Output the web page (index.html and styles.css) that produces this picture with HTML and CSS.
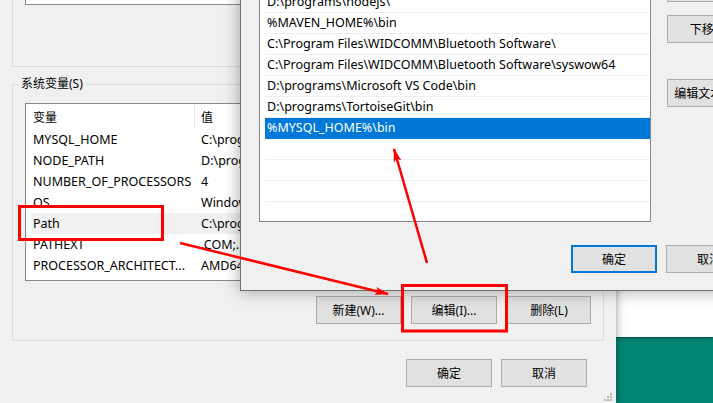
FILE: index.html
```html
<!DOCTYPE html>
<html lang="zh-CN">
<head>
<meta charset="utf-8">
<title>环境变量</title>
<link rel="stylesheet" href="styles.css">
</head>
<body>
<div class="desk">
  <div class="bgwin"></div>

  <div class="back">
    <div class="user-group"><div class="user-list"></div></div>
    <fieldset class="sys-group">
      <legend>系统变量(S)</legend>
      <div class="sys-list">
        <div class="sys-head"><span class="h-name">变量</span><span class="h-val">值</span></div>
        <div class="sys-row"><span class="c-name">MYSQL_HOME</span><span class="c-val">C:\programs\mysql-8.0.19-winx64</span></div>
        <div class="sys-row"><span class="c-name">NODE_PATH</span><span class="c-val">D:\programs\nodejs\node_global</span></div>
        <div class="sys-row"><span class="c-name">NUMBER_OF_PROCESSORS</span><span class="c-val">4</span></div>
        <div class="sys-row"><span class="c-name">OS</span><span class="c-val">Windows_NT</span></div>
        <div class="sys-row hover"><span class="c-name">Path</span><span class="c-val">C:\programs\Python38\Scripts\</span></div>
        <div class="sys-row"><span class="c-name">PATHEXT</span><span class="c-val">.COM;.EXE;.BAT;.CMD;.VBS</span></div>
        <div class="sys-row"><span class="c-name">PROCESSOR_ARCHITECT...</span><span class="c-val">AMD64</span></div>
      </div>
      <div class="btn-row">
        <button class="btn w85">新建(W)...</button>
        <button class="btn w86">编辑(I)...</button>
        <button class="btn w84">删除(L)</button>
      </div>
    </fieldset>
    <div class="dlg-row">
      <button class="btn w86">确定</button>
      <button class="btn w86">取消</button>
    </div>
    <svg class="grip" width="12" height="10" viewBox="0 0 12 10">
      <rect x="8" y="0" width="2" height="2" fill="#b9b9b9"/>
      <rect x="5" y="3" width="2" height="2" fill="#b9b9b9"/>
      <rect x="8" y="3" width="2" height="2" fill="#b9b9b9"/>
      <rect x="2" y="6" width="2" height="2" fill="#b9b9b9"/>
      <rect x="5" y="6" width="2" height="2" fill="#b9b9b9"/>
      <rect x="8" y="6" width="2" height="2" fill="#b9b9b9"/>
    </svg>
  </div>

  <div class="front">
    <div class="front-main">
      <div class="path-list">
        <div class="path-row">D:\programs\nodejs\</div>
        <div class="path-row">%MAVEN_HOME%\bin</div>
        <div class="path-row">C:\Program Files\WIDCOMM\Bluetooth Software\</div>
        <div class="path-row">C:\Program Files\WIDCOMM\Bluetooth Software\syswow64</div>
        <div class="path-row">D:\programs\Microsoft VS Code\bin</div>
        <div class="path-row">D:\programs\TortoiseGit\bin</div>
        <div class="path-row sel">%MYSQL_HOME%\bin</div>
        <div class="path-row"></div>
        <div class="path-row"></div>
        <div class="path-row"></div>
        <div class="path-row"></div>
      </div>
      <div class="side">
        <button class="btn w86 s1">上移(U)</button>
        <button class="btn w86 s2">下移(O)</button>
        <button class="btn w86 s3">编辑文本(T)...</button>
      </div>
    </div>
    <div class="front-foot">
      <button class="btn w86 focus">确定</button>
      <button class="btn w86">取消</button>
    </div>
  </div>

  <svg class="annot" width="713" height="403" viewBox="0 0 713 403">
    <defs>
      <marker id="ah" markerUnits="userSpaceOnUse" markerWidth="14" markerHeight="10" refX="13" refY="5" orient="auto">
        <path d="M0,1 L14,5 L0,9 L3,5 Z" fill="#f00"/>
      </marker>
    </defs>
    <rect x="19.5" y="206.5" width="143" height="33" fill="none" stroke="#f00" stroke-width="3"/>
    <rect x="402.5" y="285.5" width="104" height="45.5" fill="none" stroke="#f00" stroke-width="3"/>
    <line x1="180" y1="243" x2="388" y2="294" stroke="#f00" stroke-width="2.5" marker-end="url(#ah)"/>
    <line x1="427" y1="263" x2="394" y2="149" stroke="#f00" stroke-width="2.5" marker-end="url(#ah)"/>
  </svg>
</div>
</body>
</html>
```
FILE: styles.css
```css
* { box-sizing: border-box; }
html, body { margin: 0; padding: 0; }
body {
  width: 713px;
  height: 403px;
  overflow: hidden;
  background: #008574;
  font-family: "Noto Sans", "Noto Sans CJK SC", sans-serif;
  font-size: 12.5px;
  color: #000;
}
.desk { position: relative; width: 713px; height: 403px; overflow: hidden; }

.bgwin {
  position: absolute; left: 616px; top: 0; width: 97px; height: 337px;
  background: #fff; box-shadow: 0 1px 3px rgba(0,0,0,.45);
}

.back {
  position: absolute; left: 0; top: 0; width: 616px; height: 403px;
  background: #f0f0f0; padding: 0 12px;
  box-shadow: 1px 0 8px rgba(0,0,0,.35);
}
.user-group {
  height: 67px; border: 1px solid #dcdcdc; border-top: 0; padding-left: 12px;
}
.user-list {
  width: 560px; height: 5px; background: #fff;
  border: 1px solid #828790; border-top: 0;
}

.sys-group {
  margin: 9px 0 0; padding: 0 12px 16px; border: 1px solid #dcdcdc; min-width: 0;
}
.sys-group legend {
  margin-left: -7px; padding: 0 3px; line-height: 16px; font-size: 12px;
}
.sys-list {
  margin-top: 11px; width: 570px; height: 178px; background: #fff;
  border: 1px solid #828790; padding-left: 5px; overflow: hidden;
}
.sys-head { display: flex; height: 25px; align-items: stretch; }
.h-name {
  width: 164px; padding-left: 2px; border-right: 1px solid #e5e5e5;
  display: flex; align-items: center; font-size: 12px;
}
.h-val { padding-left: 6px; display: flex; align-items: center; font-size: 12px; }
.sys-row { display: flex; height: 21px; align-items: center; white-space: nowrap; }
.sys-row.hover { background: #f0f0f0; }
.c-name { width: 170px; padding-left: 2px; overflow: hidden; }
.c-val { white-space: nowrap; }

.btn {
  font: inherit; font-size: 12px; color: #000; background: #e1e1e1;
  border: 1px solid #adadad; height: 28px; padding: 0; margin: 0;
  display: flex; align-items: center; justify-content: center; white-space: nowrap;
}
.w84 { width: 84px; }
.w85 { width: 85px; }
.w86 { width: 86px; flex: none; }
.btn.focus { border: 2px solid #0078d7; }

.btn-row { display: flex; justify-content: flex-end; gap: 10px; margin-top: 15px; }
.dlg-row { display: flex; justify-content: flex-end; gap: 9px; margin: 18px 17px 0 0; }

.grip { position: absolute; right: 2px; bottom: 0; }

.front {
  position: absolute; left: 240px; top: -40px; width: 520px;
  background: #f0f0f0; border: 1px solid #6f6f6f;
  padding: 30px 0 17px 18px;
  box-shadow: 0 0 16px rgba(0,0,0,.35);
}
.front-main { display: flex; align-items: flex-start; gap: 16px; }
.path-list {
  width: 392px; height: 231px; flex: none; background: #fff;
  border: 1px solid #828790; padding-left: 5px; overflow: hidden;
}
.path-row {
  height: 21px; line-height: 20px; border-bottom: 1px solid #efefef;
  padding-left: 2px; white-space: nowrap;
}
.path-row.sel { background: #0078d7; color: #fff; border-bottom-color: #0078d7; }
.side { display: flex; flex-direction: column; }
.side .s1 { margin-top: -17px; }
.side .s2 { margin-top: 13px; }
.side .s3 { margin-top: 36px; }
.front-foot { display: flex; gap: 9px; margin: 23px 0 0 312px; }

.annot { position: absolute; left: 0; top: 0; pointer-events: none; }
```
